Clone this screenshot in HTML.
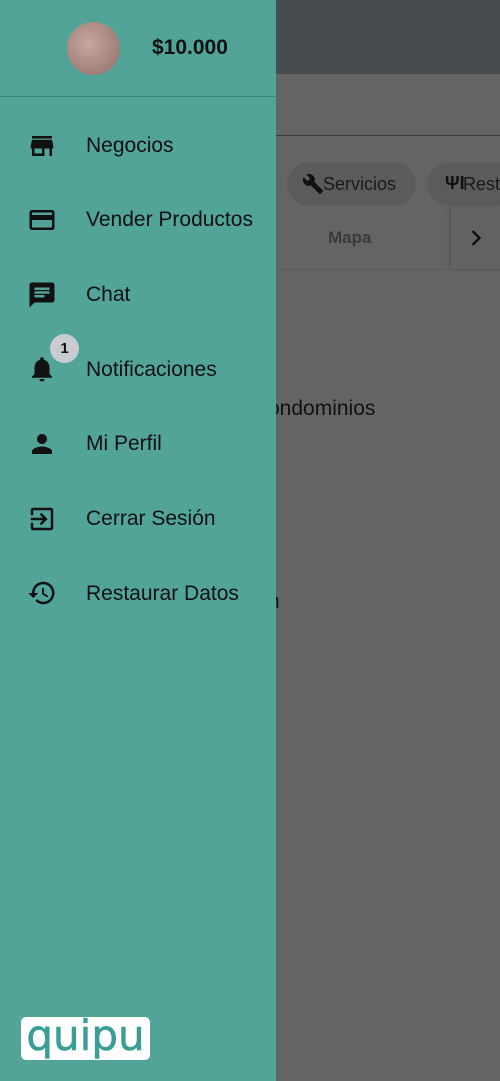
<!DOCTYPE html>
<html><head><style>
body{margin:0;width:500px;height:1081px;position:relative;overflow:hidden;background:#646464;font-family:"Liberation Sans",Roboto,sans-serif}
.hdr{position:absolute;left:0;top:0;width:500px;height:74px;background:#474c4f}
.line{position:absolute;left:276px;right:0;top:135px;height:1px;background:#3a3a3a}
.chip{position:absolute;top:163px;height:42px;border-radius:21px;background:#5b5b5b;color:#1a1a1a;font-size:18px;line-height:42px}
.tabs{position:absolute;left:276px;right:0;top:207px;height:62px;border-bottom:1px solid #5a5a5a}
.drawer{position:absolute;left:0;top:0;width:276px;height:1081px;background:#52a398}
.avatar{position:absolute;left:67px;top:22px;width:53px;height:53px;border-radius:50%;background:radial-gradient(circle at 40% 40%,#c8a79d,#8d6e66)}
.bal{position:absolute;left:152px;top:36px;font-size:21px;font-weight:bold;color:#111}
.sep{position:absolute;left:0;top:96px;width:276px;height:1px;background:#3f8279}
.item{position:absolute;left:86px;font-size:21px;color:#111}
.ic{position:absolute;left:27px;width:30px;height:30px}
</style></head><body>
<div class="hdr"></div>
<div class="line"></div>
<div class="chip" style="left:287px;width:129px;padding-left:36px;box-sizing:border-box">Servicios</div>
<svg style="position:absolute;left:302px;top:173px" width="22" height="22" viewBox="0 0 24 24"><path fill="#111" d="M22.7 19l-9.1-9.1c.9-2.3.4-5-1.5-6.9-2-2-5-2.4-7.4-1.3L9 6 6 9 1.6 4.7C.4 7.1.9 10.1 2.9 12.1c1.900 1.9 4.6 2.4 6.9 1.5l9.1 9.1c.4.4 1 .4 1.4 0l2.3-2.3c.5-.4.5-1.1.1-1.4z"/></svg>
<div class="chip" style="left:427px;width:100px;padding-left:36px;box-sizing:border-box">Rest</div>
<div style="position:absolute;left:445px;top:173px;font-size:18px;color:#111;font-weight:bold">ΨI</div>
<div class="tabs"><div style="position:absolute;left:52px;top:21px;font-size:17px;font-weight:bold;color:#3a3a3a">Mapa</div>
<div style="position:absolute;left:175px;top:0;width:50px;height:62px;background:#636363;box-shadow:-2px 0 3px #555"></div>
<svg style="position:absolute;left:186px;top:17px" width="28" height="28" viewBox="0 0 24 24"><path d="M9 6l6 6-6 6" stroke="#111" stroke-width="2" fill="none"/></svg></div>
<div style="position:absolute;left:268px;top:397px;font-size:21px;color:#111">ondominios</div>
<div style="position:absolute;left:268px;top:590px;font-size:21px;color:#111">n</div>
<div class="drawer">
<div class="avatar"></div>
<div class="bal">$10.000</div>
<div class="sep"></div>
<svg class="ic" style="top:131px" viewBox="0 0 24 24"><path fill="#111" d="M20 4H4v2h16V4zm1 10v-2l-1-5H4l-1 5v2h1v6h10v-6h4v6h2v-6h1zm-9 4H6v-4h6v4z"/></svg>
<div class="item" style="top:134px">Negocios</div>
<svg class="ic" style="top:205px" viewBox="0 0 24 24"><path fill="#111" d="M20 4H4c-1.1 0-2 .9-2 2v12c0 1.1.9 2 2 2h16c1.1 0 2-.9 2-2V6c0-1.1-.9-2-2-2zm0 14H4v-6h16v6zm0-10H4V6h16v2z"/></svg>
<div class="item" style="top:208px">Vender Productos</div>
<svg class="ic" style="top:280px" viewBox="0 0 24 24"><path fill="#111" d="M20 2H4c-1.1 0-2 .9-2 2v18l4-4h14c1.1 0 2-.9 2-2V4c0-1.1-.9-2-2-2zM6 9h12v2H6V9zm8 5H6v-2h8v2zm4-6H6V6h12v2z"/></svg>
<div class="item" style="top:283px">Chat</div>
<svg class="ic" style="top:354px" viewBox="0 0 24 24"><path fill="#111" d="M12 22c1.1 0 2-.9 2-2h-4c0 1.1.9 2 2 2zm6-6v-5c0-3.1-1.6-5.6-4.5-6.3V4c0-.8-.7-1.5-1.5-1.5s-1.5.7-1.5 1.5v.7C7.6 5.4 6 7.900 6 11v5l-2 2v1h16v-1l-2-2z"/></svg>
<div style="position:absolute;left:50px;top:334px;width:29px;height:29px;border-radius:50%;background:#c9cdd0;font-size:15px;font-weight:bold;text-align:center;line-height:29px;color:#111">1</div>
<div class="item" style="top:358px">Notificaciones</div>
<svg class="ic" style="top:429px" viewBox="0 0 24 24"><path fill="#111" d="M12 12c2.2 0 4-1.8 4-4s-1.8-4-4-4-4 1.8-4 4 1.8 4 4 4zm0 2c-2.7 0-8 1.3-8 4v2h16v-2c0-2.7-5.3-4-8-4z"/></svg>
<div class="item" style="top:432px">Mi Perfil</div>
<svg class="ic" style="top:504px" viewBox="0 0 24 24"><path fill="#111" d="M10.1 15.6l1.4 1.4 5-5-5-5-1.4 1.4 2.6 2.6H3v2h9.7l-2.6 2.6zM19 3H5c-1.1 0-2 .9-2 2v4h2V5h14v14H5v-4H3v4c0 1.1.9 2 2 2h14c1.1 0 2-.9 2-2V5c0-1.1-.9-2-2-2z"/></svg>
<div class="item" style="top:507px">Cerrar Sesión</div>
<svg class="ic" style="top:578px" viewBox="0 0 24 24"><path fill="#111" d="M13 3a9 9 0 0 0-9 9H1l3.9 3.9.1.1L9 12H6c0-3.9 3.1-7 7-7s7 3.1 7 7-3.1 7-7 7c-1.9 0-3.7-.8-4.9-2.1l-1.4 1.4C8.3 20 10.5 21 13 21a9 9 0 0 0 0-18zm-1 5v5l4.3 2.5.7-1.2-3.5-2.1V8H12z"/></svg>
<div class="item" style="top:582px">Restaurar Datos</div>
<div style="position:absolute;left:21px;top:1017px;width:129px;height:43px;background:#fff;border-radius:5px;color:#3a9e96;font-size:42px;line-height:38px;text-align:center;font-family:'DejaVu Sans',sans-serif;overflow:hidden;-webkit-text-stroke:0.6px #3a9e96">quipu</div>
</div>
</body></html>
